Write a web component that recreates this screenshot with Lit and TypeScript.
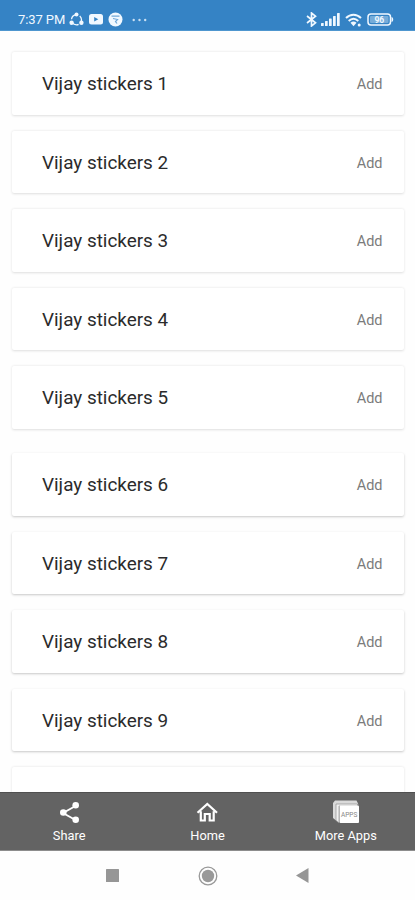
import { LitElement, html, css, svg } from "lit";
import { customElement } from "lit/decorators.js";

const packs = Array.from({ length: 9 }, (_, i) => `Vijay stickers ${i + 1}`);

@customElement("status-bar")
class StatusBar extends LitElement {
  static styles = css`
    :host { display: flex; height: 31px; box-sizing: border-box; padding: 9px 21px 0 18px; background: #3583c5; border-bottom: 1px solid #4e96cf; color: #f0f8ff; justify-content: space-between; align-items: flex-start; flex: none; }
    .side { display: flex; align-items: center; height: 21px; }
    .time { font-size: 13px; line-height: 21px; width: 50px; white-space: nowrap; letter-spacing: -0.1px; }
    svg { display: block; fill: currentColor; }
    .share { margin-left: 1px; }
    .tube { margin-left: 5px; }
    .round { margin-left: 5px; }
    .dots { margin-left: 9px; }
    .signal { margin-left: 4px; }
    .wifi { margin-left: 5px; }
    .battery { margin-left: 5px; }
    .level { font: 700 8.5px Roboto, sans-serif; }
  `;
  render() {
    return html`
      <div class="side">
        <span class="time">7:37 PM</span>
        <svg class="share" width="15" height="15" viewBox="0 0 15 15">
          <circle cx="7.5" cy="7.8" r="5" fill="none" stroke="currentColor" stroke-width="1.3" stroke-dasharray="7 3.47" stroke-dashoffset="5"/>
          <circle cx="7.5" cy="2.6" r="2"/><circle cx="2.6" cy="10.8" r="2.2"/><circle cx="12.4" cy="10.8" r="2.2"/>
        </svg>
        <svg class="tube" width="14" height="11" viewBox="0 0 14 11">
          <rect width="14" height="10.5" rx="2.5"/><path d="M5.2 3v4.6L9.3 5.3z" fill="#3583c5"/>
        </svg>
        <svg class="round" width="15" height="15" viewBox="0 0 15 15">
          <circle cx="7.5" cy="7.5" r="7"/>
          <path d="M3.5 4.2H11.5M5 6.5l4.5 1-2 2 1.5 2" fill="none" stroke="#6fa7d8" stroke-width="1.2"/>
        </svg>
        <svg class="dots" width="15" height="4" viewBox="0 0 15 4" opacity=".8">
          <circle cx="1.7" cy="2" r="1.2"/><circle cx="7.5" cy="2" r="1.2"/><circle cx="13.2" cy="2" r="1.2"/>
        </svg>
      </div>
      <div class="side">
        <svg width="11" height="15" viewBox="0 0 11 15">
          <path d="M1 4 9.5 10.8 5.5 14V1l4 3.2L1 11" fill="none" stroke="currentColor" stroke-width="1.7"/>
        </svg>
        <svg class="signal" width="19" height="13" viewBox="0 0 19 13">
          <rect x="0" y="10" width="2.7" height="3" rx=".6"/><rect x="4" y="8" width="2.7" height="5" rx=".6"/><rect x="8" y="5.5" width="2.7" height="7.5" rx=".6"/><rect x="12" y="3" width="2.7" height="10" rx=".6"/><rect x="16" y="0" width="2.7" height="13" rx=".6"/>
        </svg>
        <svg class="wifi" width="17" height="14" viewBox="0 0 17 14">
          <path d="M1 5c4.5-4.3 10.5-4.3 15 0M3.7 8c3-2.8 6.6-2.8 9.6 0" fill="none" stroke="currentColor" stroke-width="2"/>
          <path d="M5.5 9.8c2-1.6 4-1.6 6 0L8.5 13.2z"/><circle cx="14.2" cy="12" r="1.5"/>
        </svg>
        <svg class="battery" width="27" height="13" viewBox="0 0 27 13">
          <rect x="1" y="1" width="22.5" height="11" rx="3" fill="none" stroke="currentColor" stroke-width="1.5"/>
          <rect x="3" y="3" width="18.5" height="7" rx="1" opacity=".35"/>
          <path d="M24.5 4c2.3.5 2.3 4.5 0 5z"/>
          <text class="level" x="12.3" y="9.6" text-anchor="middle">96</text>
        </svg>
      </div>`;
  }
}

@customElement("sticker-list")
class StickerList extends LitElement {
  static styles = css`
    :host { display: flex; flex-direction: column; gap: 16px; height: 761px; box-sizing: border-box; padding: 21px 11px 0 12px; overflow: hidden; flex: none; }
    .card { flex: none; height: 62.5px; box-sizing: border-box; padding: 1px 21.5px 0 30px; display: flex; justify-content: space-between; align-items: center; background: #fff; border-radius: 2px; box-shadow: 0 .5px 2.5px rgba(0,0,0,.13); }
    .lower { box-shadow: 0 1px 2.5px rgba(0,0,0,.22); }
    .section { margin-top: 8.5px; }
    .name { font-size: 18.9px; color: #2b2b2b; }
    .add { font-size: 14.5px; color: #7b7b7b; padding-top: 1.5px; }
  `;
  render() {
    return html`
      ${packs.map((name, i) => html`
        <div class="card ${i > 4 ? "lower" : ""} ${i === 5 ? "section" : ""}">
          <span class="name">${name}</span><span class="add">Add</span>
        </div>`)}
      <div class="card"></div>`;
  }
}

const shareIcon = svg`<path d="M20.5 6 8 13l12.5 7" fill="none" stroke="#fff" stroke-width="1.9"/><circle cx="20.7" cy="5.3" r="3.3"/><circle cx="8.3" cy="12.5" r="3.3"/><circle cx="20.7" cy="19.8" r="3.3"/>`;
const homeIcon = svg`<path d="M4.5 12.8 14.3 4l9.7 8.8M7.8 11.3v9.2h4v-6.5h4.9v6.5h4V11.3" fill="none" stroke="#fff" stroke-width="2.2"/>`;
const appsIcon = svg`<path d="M1 3 3 .5h21.5l2 4H4v16L1 18z" fill="#dadada"/><path d="M4 20.5V4h21.5v2H7v17z" fill="#f0f0f0" stroke="#858585" stroke-width=".6"/><rect x="7.5" y="5.5" width="19.5" height="17.5" rx="1"/><text class="label" x="17.2" y="17.3" text-anchor="middle">APPS</text>`;

@customElement("bottom-tabs")
class BottomTabs extends LitElement {
  static styles = css`
    :host { display: grid; grid-template-columns: repeat(3, 1fr); height: 59px; box-sizing: border-box; background: #636363; border-top: 1px solid #505050; border-bottom: 1px solid #8d8d8d; flex: none; }
    .tab { display: flex; flex-direction: column; align-items: center; padding-top: 7px; color: #fff; font-size: 12.8px; line-height: 16px; gap: 3px; }
    svg { width: 28px; height: 25px; fill: #fff; }
    .label { font: 6.5px Roboto, sans-serif; fill: #888; }
  `;
  render() {
    return [["Share", shareIcon], ["Home", homeIcon], ["More Apps", appsIcon]].map(([label, icon]) => html`
      <div class="tab"><svg viewBox="0 0 28 25">${icon}</svg><span>${label}</span></div>`);
  }
}

@customElement("app-root")
class AppRoot extends LitElement {
  static styles = css`
    :host { display: flex; flex-direction: column; height: 900px; overflow: hidden; background: #fefefe; font-family: Roboto, sans-serif; }
    .system { flex: 1; display: flex; align-items: center; justify-content: space-between; padding: 0 106px; }
    svg { display: block; }
  `;
  render() {
    return html`
      <status-bar></status-bar>
      <sticker-list></sticker-list>
      <bottom-tabs></bottom-tabs>
      <div class="system">
        <svg width="13" height="13"><rect width="13" height="13" rx=".5" fill="#969696"/></svg>
        <svg width="20" height="20" viewBox="0 0 20 20"><circle cx="10" cy="10" r="8.8" fill="none" stroke="#999" stroke-width="1.3"/><circle cx="10" cy="10" r="6.2" fill="#999"/></svg>
        <svg width="13" height="15" viewBox="0 0 13 15"><path d="M0 7.5 12.5 0v15z" fill="#969696"/></svg>
      </div>`;
  }
}
